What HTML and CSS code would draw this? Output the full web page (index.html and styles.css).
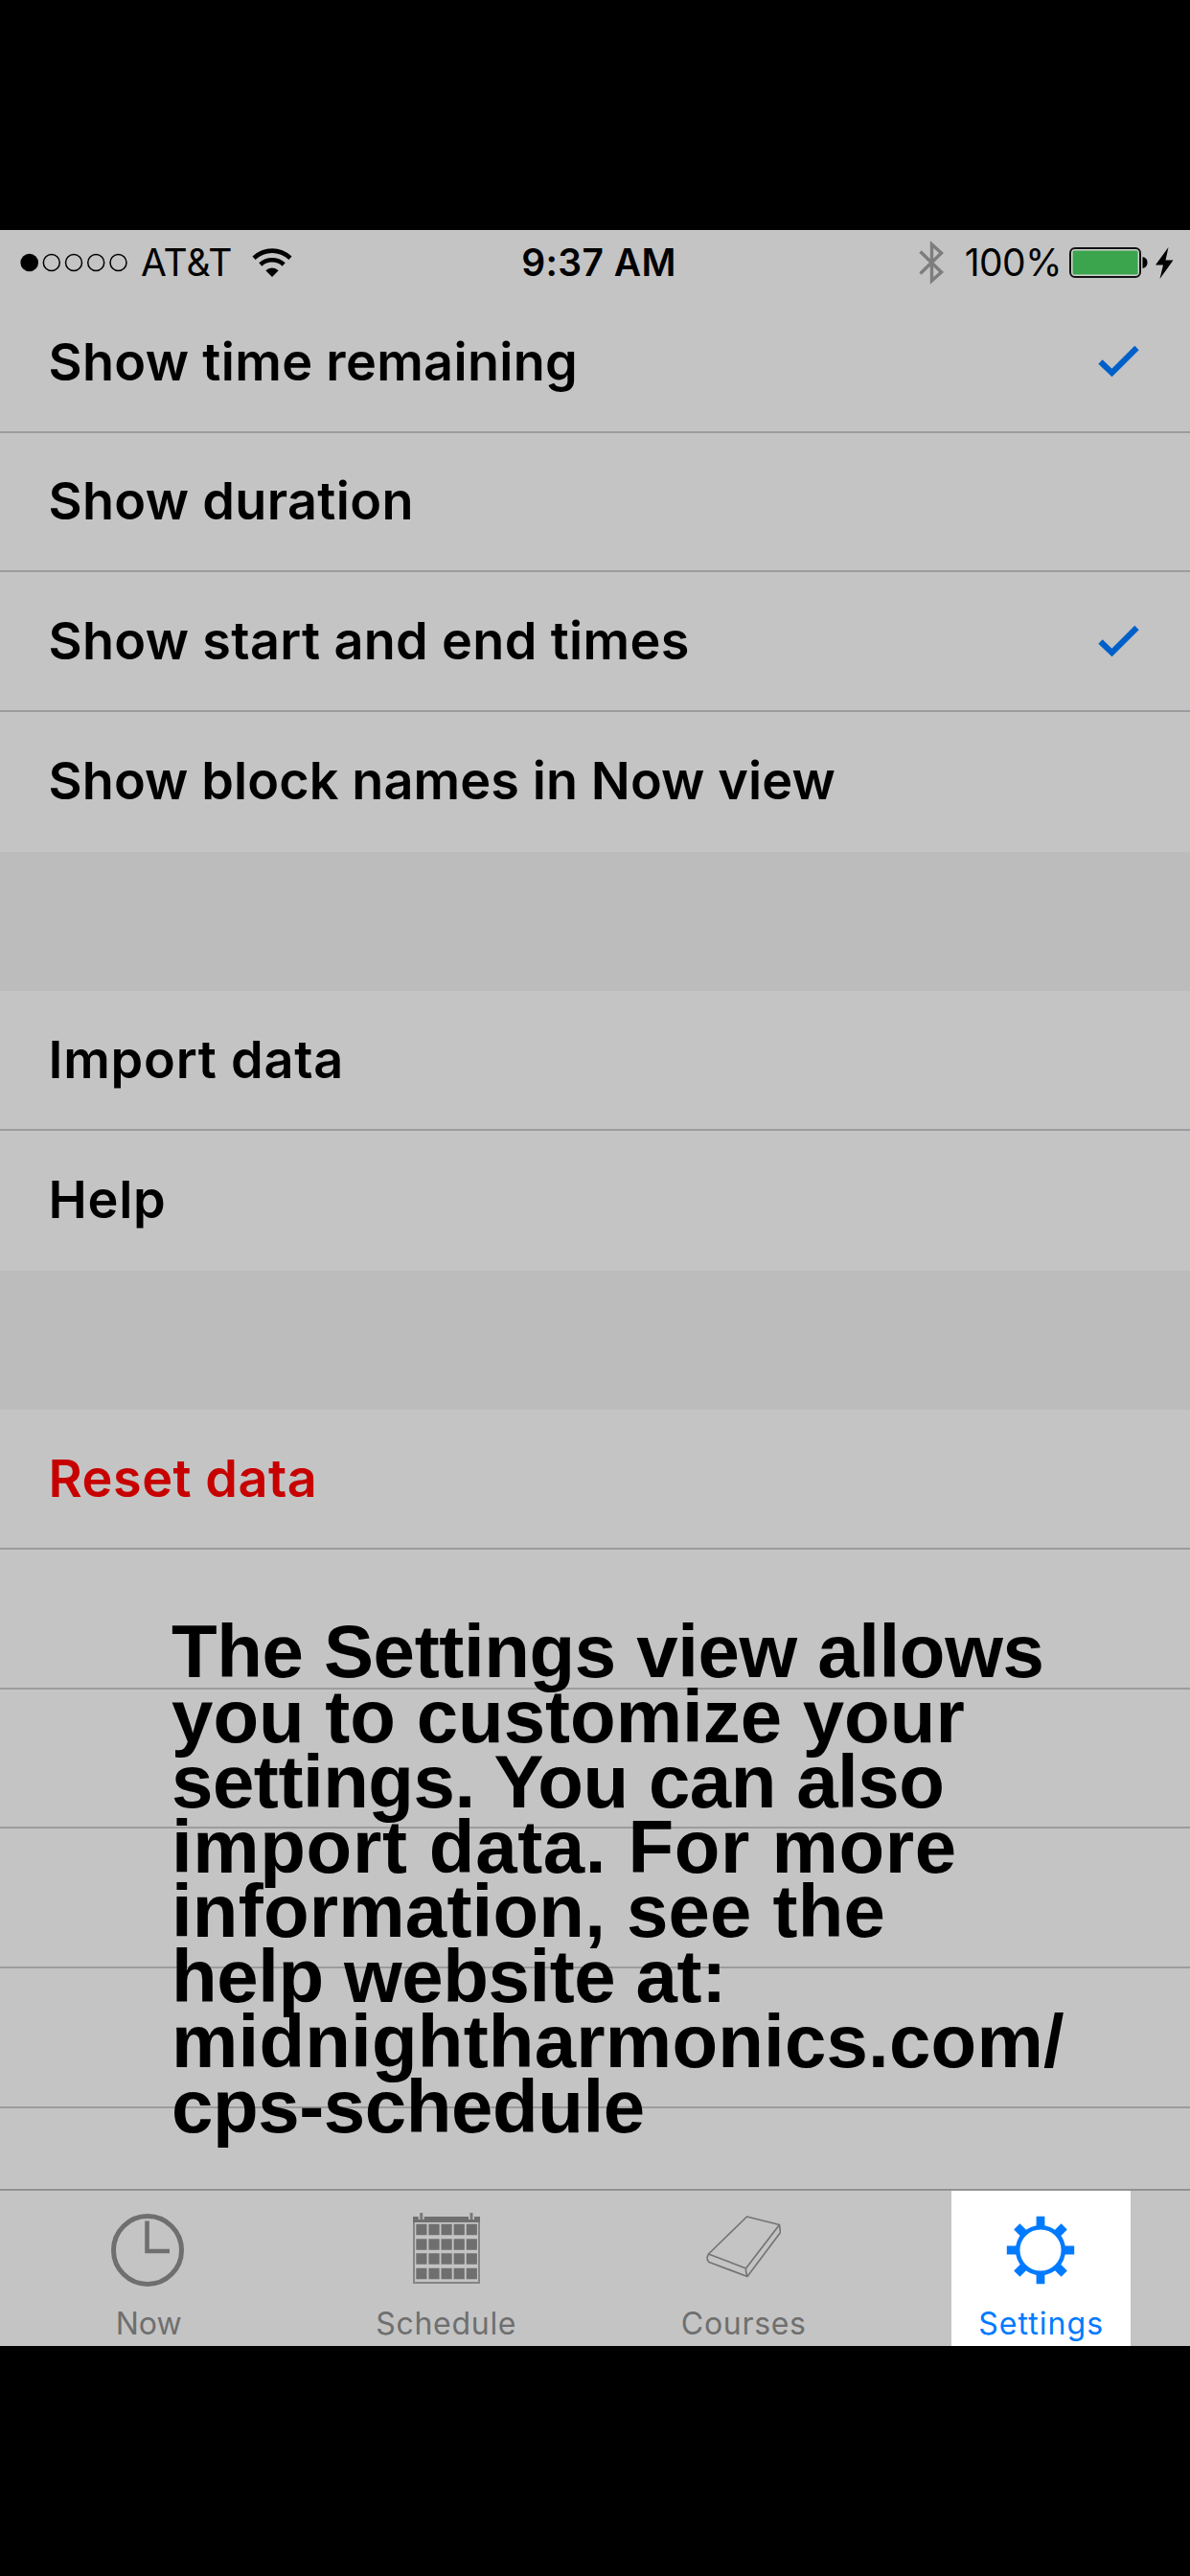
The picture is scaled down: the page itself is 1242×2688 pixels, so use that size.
FILE: index.html
```html
<!DOCTYPE html>
<html lang="en">
<head>
<meta charset="utf-8">
<title>Settings</title>
<link rel="stylesheet" href="styles.css">
</head>
<body>
<main class="screen">
  <header class="status">
    <div class="status-left">
      <svg class="signal" width="112" height="20" viewBox="0 0 112 20">
        <circle cx="9.7" cy="10" r="9.3"/>
        <g fill="none" stroke="#000" stroke-width="1.5"><circle cx="32.8" cy="10" r="8.5"/><circle cx="56" cy="10" r="8.5"/><circle cx="79.2" cy="10" r="8.5"/><circle cx="102.5" cy="10" r="8.5"/></g>
      </svg>
      <span class="carrier">AT&amp;T</span>
      <svg class="wifi" width="42" height="31" viewBox="0 0 42 31">
        <g fill="none" stroke="#000" stroke-width="4.6"><path d="M2 10.2Q10.500 2.600 21 2.600T40 10.200"/><path d="M8.800 17Q14 12.300 21 12.300T33.200 17"/></g>
        <path d="M14.300 23.300Q17.200 20.400 21 20.400T27.700 23.300L21 30Z"/>
      </svg>
    </div>
    <span class="clock">9:37 AM</span>
    <div class="status-right">
      <svg class="bluetooth" width="27" height="46" viewBox="0 0 27 46"><path d="M1.500 11.500L23.500 33L13.500 42V4L23.500 13L1.500 34.500" fill="none" stroke="#7d7d7d" stroke-width="3.400"/></svg>
      <span class="percent">100%</span>
      <svg class="battery" width="82" height="32" viewBox="0 0 82 32">
        <rect x="1" y="1" width="73" height="30" rx="5" fill="#d2d2d2" stroke="#111" stroke-width="2"/>
        <rect x="3.600" y="3.600" width="68" height="25" rx="1.500" fill="#3aa54c"/>
        <path d="M76.500 10Q81.500 11 81.500 16T76.500 22Z"/>
      </svg>
      <svg class="bolt" width="19" height="33" viewBox="0 0 19 33"><path d="M13.500 0L0 18.500H8L4.500 33L18.500 13.500H10.500Z"/></svg>
    </div>
  </header>

  <ul class="rows">
    <li class="row">Show time remaining<svg class="check" width="44" height="34" viewBox="0 0 44 34"><path d="M2.500 17.500L14.500 29L40.500 3" fill="none" stroke="#0060c9" stroke-width="6.200"/></svg></li>
    <li class="row">Show duration</li>
    <li class="row">Show start and end times<svg class="check" width="44" height="34" viewBox="0 0 44 34"><path d="M2.500 17.500L14.500 29L40.500 3" fill="none" stroke="#0060c9" stroke-width="6.200"/></svg></li>
    <li class="row last tight">Show block names in Now view</li>
    <li class="row gap"></li>
    <li class="row loose">Import data</li>
    <li class="row last loose">Help</li>
    <li class="row gap"></li>
    <li class="row danger">Reset data</li>
    <li class="row"></li>
    <li class="row"></li>
    <li class="row"></li>
    <li class="row"></li>
    <li class="row last"></li>
  </ul>

  <p class="tip"><span class="l1">The Settings view allows</span><span class="l2">you to customize your</span><span class="l3">settings. You can also</span><span class="l4">import data. For more</span><span class="l5">information, see the</span><span class="l6">help website at:</span><span class="l7">midnightharmonics.com/</span><span class="l8">cps-schedule</span></p>

  <nav class="tabs">
    <div class="tab">
      <svg class="icon" width="78" height="78" viewBox="0 0 78 78" fill="none" stroke="#6f6f6f"><circle cx="38" cy="39" r="35.500" stroke-width="5"/><path d="M37.500 8.500V40H61" stroke-width="4.600"/></svg>
      <span class="name">Now</span>
    </div>
    <div class="tab">
      <svg class="icon" width="78" height="78" viewBox="0 0 78 78">
        <path d="M5 5H73V73H5Z" fill="none" stroke="#858585" stroke-width="2"/>
        <path d="M4 4H74V10H4Z" fill="#6f6f6f"/>
        <path d="M12.700 0V7M65 0V7" stroke="#c4c4c4" stroke-width="6"/><path d="M12.700 0V7.500M65 0V7.500" stroke="#7a7a7a" stroke-width="3"/>
        <path d="M7.300 17.500H71.500M7.300 33H71.500M7.300 48H71.500M7.300 63.500H71.500" fill="none" stroke="#6f6f6f" stroke-width="11.500" stroke-dasharray="11.200 1.900"/>
      </svg>
      <span class="name wide">Schedule</span>
    </div>
    <div class="tab">
      <svg class="icon" width="78" height="78" viewBox="0 0 78 78" fill="none" stroke="#747474" stroke-width="1.700" stroke-linejoin="round"><path d="M2.500 43L42.500 4L76.500 12.500L41.500 58ZM2.500 43Q-.500 48 3 51.500L43 66.500L77.500 20.500L76.500 12.500M41.500 58V61L43 66.500"/></svg>
      <span class="name wide">Courses</span>
    </div>
    <div class="tab">
      <div class="active">
        <svg class="icon" width="78" height="78" viewBox="0 0 78 78" fill="none" stroke="#007aff"><circle cx="38" cy="39" r="23.800" stroke-width="4.500"/><g stroke-width="8.800"><path d="M38 3.800V15M38 63V74.200M2.800 39H14M62 39H73.200"/><path d="M13.300 14.300L21.800 22.800M54.200 55.200L62.700 63.700M13.300 63.700L21.800 55.200M54.200 22.800L62.700 14.300"/></g></svg>
        <span class="name wider">Settings</span>
      </div>
    </div>
  </nav>
</main>
</body>
</html>
```
FILE: styles.css
```css
* { box-sizing: border-box; }

body {
  margin: 0;
  padding: 240px 0;
  background: #000;
  font-family: Inter, "Open Sans", sans-serif;
  color: #000;
}

.screen {
  position: relative;
  display: flex;
  flex-direction: column;
  width: 1242px;
  height: 2208px;
  background: #c4c4c4;
  overflow: hidden;
}

.status {
  display: grid;
  grid-template-columns: 1fr auto 1fr;
  align-items: center;
  flex: none;
  height: 66px;
  padding: 2px 17px 0 21px;
  font-size: 39px;
  line-height: 48px;
}

.status-left,
.status-right { display: flex; align-items: center; }
.status-right { justify-content: flex-end; }
.carrier { margin: 0 20px 0 14px; }
.clock { margin-left: 4px; font-weight: 600; letter-spacing: 0.4px; }
.bluetooth { margin-right: 21px; }
.percent { letter-spacing: -0.5px; margin-right: 8px; }
.battery { margin-right: 8px; }

.rows {
  flex: none;
  height: 1978px;
  margin: 0;
  padding: 0;
  list-style: none;
  overflow: hidden;
}

.row {
  display: flex;
  align-items: center;
  justify-content: space-between;
  height: 145.67px;
  padding: 0 52px 1px 50.500px;
  border-bottom: 2px solid #9c9c9e;
  font-size: 54px;
  font-weight: 600;
  letter-spacing: 0.33px;
}

.last { border-bottom-color: transparent; }
.tight { letter-spacing: 0.1px; }
.loose { letter-spacing: 0.75px; }
.gap { background: #bcbcbc; border: 0; }
.danger { color: #c70000; letter-spacing: 0.5px; }

.tip {
  position: absolute;
  left: 179px;
  top: 1450px;
  margin: 0;
  font: 700 78px/67.850px "Liberation Sans", Arial, sans-serif;
  white-space: nowrap;
}

.tip span { display: block; }
.l1 { letter-spacing: -0.35px; }
.l3 { letter-spacing: -0.45px; }
.l4 { letter-spacing: 0.65px; }
.l5 { letter-spacing: 0.2px; }
.l6 { letter-spacing: -0.4px; }
.l7 { letter-spacing: 0.2px; }
.l8 { letter-spacing: -0.4px; }

.tabs {
  display: grid;
  grid-template-columns: repeat(4, 1fr);
  flex: none;
  height: 164px;
  border-top: 2px solid #929292;
  background: #c4c4c4;
  color: #6f6f6f;
}

.tab { display: flex; flex-direction: column; align-items: center; padding-top: 23px; }
.tab:last-child { padding-top: 0; }

.active {
  display: flex;
  flex-direction: column;
  align-items: center;
  width: 187px;
  height: 162px;
  padding-top: 23px;
  background: #fff;
  color: #007aff;
}

.icon { display: block; }
.name { margin-top: 18px; font-size: 32px; line-height: 40px; letter-spacing: 0.1px; }
.wide { letter-spacing: 0.7px; }
.wider { letter-spacing: 1.050px; }
```
